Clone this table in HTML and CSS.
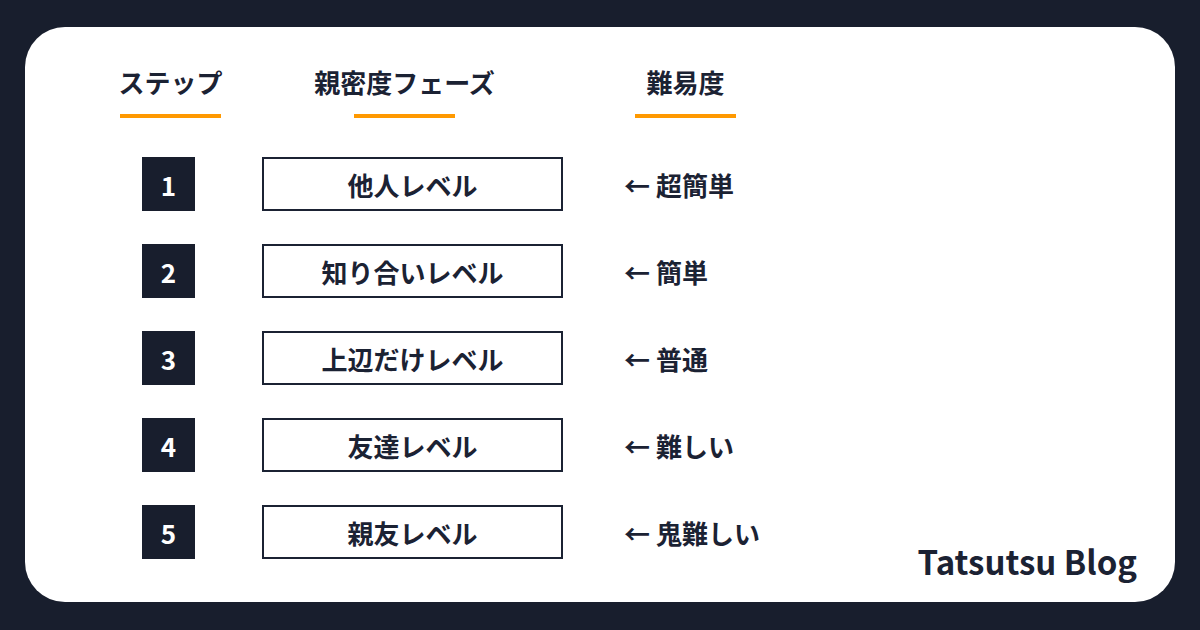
FILE: index.html
```html
<!DOCTYPE html>
<html lang="ja">
<head>
<meta charset="utf-8">
<link rel="stylesheet" href="styles.css">
</head>
<body>
<div class="card">
  <div class="head">
    <div class="hcol h1"><span class="htext">ステップ</span><span class="bar"></span></div>
    <div class="hcol h2"><span class="htext">親密度フェーズ</span><span class="bar"></span></div>
    <div class="hcol h3"><span class="htext">難易度</span><span class="bar"></span></div>
  </div>
  <div class="body">
    <div class="rows">
      <div class="row"><div class="num">1</div><div class="level">他人レベル</div><div class="diff">← 超簡単</div></div>
      <div class="row"><div class="num">2</div><div class="level">知り合いレベル</div><div class="diff">← 簡単</div></div>
      <div class="row"><div class="num">3</div><div class="level">上辺だけレベル</div><div class="diff">← 普通</div></div>
      <div class="row"><div class="num">4</div><div class="level">友達レベル</div><div class="diff">← 難しい</div></div>
      <div class="row"><div class="num">5</div><div class="level">親友レベル</div><div class="diff">← 鬼難しい</div></div>
    </div>
    <div class="brand">Tatsutsu Blog</div>
  </div>
</div>
</body>
</html>
```
FILE: styles.css
```css
html, body {
  margin: 0;
  padding: 0;
}
body {
  width: 1200px;
  height: 630px;
  background: #181e2d;
  font-family: "Noto Sans CJK JP", "Noto Sans", sans-serif;
  font-weight: 700;
  color: #1b2233;
  padding: 27px 25px 0 25px;
  box-sizing: border-box;
  overflow: hidden;
}
.card {
  width: 1150px;
  height: 575px;
  background: #ffffff;
  border-radius: 40px;
  box-sizing: border-box;
  padding: 42px 38px 25px 95px;
  display: flex;
  flex-direction: column;
}
.head {
  display: flex;
}
.hcol {
  width: 101px;
  display: flex;
  flex-direction: column;
  align-items: center;
}
.h2 { margin-left: 133px; }
.h3 { margin-left: 180px; }
.htext {
  font-size: 26px;
  line-height: 26px;
  white-space: nowrap;
}
.bar {
  display: block;
  width: 101px;
  height: 4px;
  margin-top: 19px;
  background: #ff9900;
}
.body {
  flex: 1;
  display: flex;
  align-items: flex-end;
  margin-top: 39px;
}
.rows {
  display: flex;
  flex-direction: column;
  gap: 33px;
  padding-left: 22px;
  margin-bottom: 18px;
  align-self: flex-start;
}
.row {
  display: flex;
  align-items: center;
  height: 54px;
}
.num {
  width: 53px;
  height: 54px;
  background: #181e2d;
  color: #ffffff;
  font-size: 26px;
  display: flex;
  align-items: center;
  justify-content: center;
}
.level {
  width: 301px;
  height: 54px;
  margin-left: 67px;
  box-sizing: border-box;
  border: 2px solid #1b2233;
  font-size: 26px;
  display: flex;
  align-items: center;
  justify-content: center;
}
.diff {
  margin-left: 61px;
  font-size: 26px;
  white-space: nowrap;
}
.brand {
  margin-left: auto;
  font-size: 33px;
  line-height: 32px;
  white-space: nowrap;
}
```
